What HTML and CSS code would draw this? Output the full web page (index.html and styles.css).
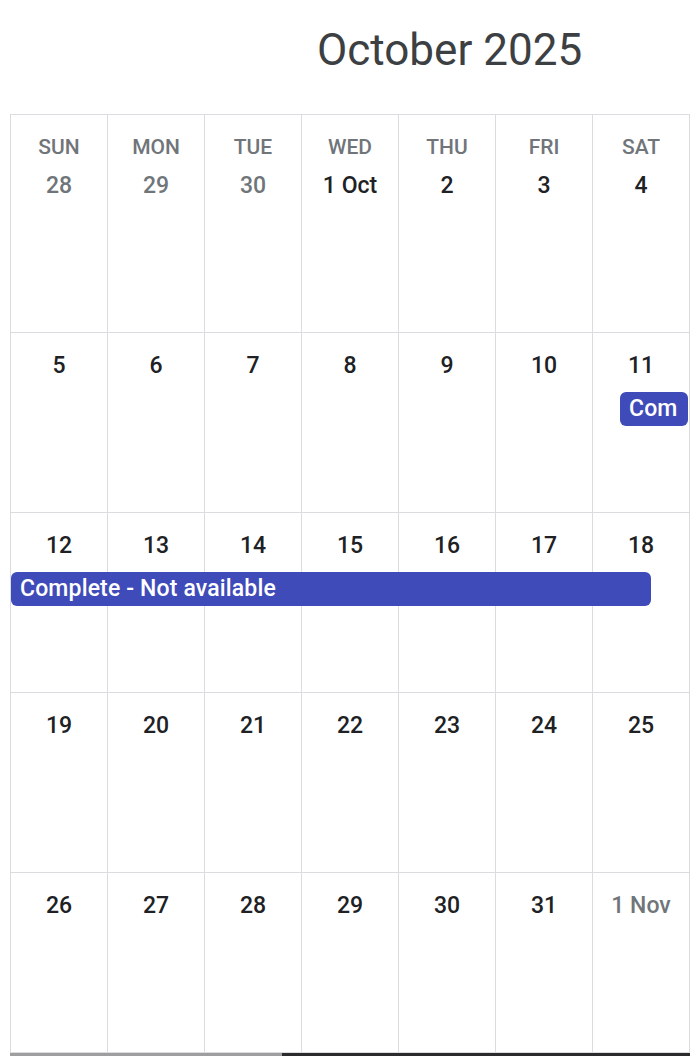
FILE: index.html
```html
<!DOCTYPE html>
<html>
<head>
<meta charset="utf-8">
<link rel="stylesheet" href="styles.css">
</head>
<body>
<header class="toolbar">
  <h1 class="title">October 2025</h1>
</header>
<main class="month">
  <div class="week week-first">
    <div class="cell"><span class="dow">SUN</span><span class="date muted">28</span></div>
    <div class="cell"><span class="dow">MON</span><span class="date muted">29</span></div>
    <div class="cell"><span class="dow">TUE</span><span class="date muted">30</span></div>
    <div class="cell"><span class="dow">WED</span><span class="date">1 Oct</span></div>
    <div class="cell"><span class="dow">THU</span><span class="date">2</span></div>
    <div class="cell"><span class="dow">FRI</span><span class="date">3</span></div>
    <div class="cell"><span class="dow">SAT</span><span class="date">4</span></div>
  </div>
  <div class="week">
    <div class="cell"><span class="date">5</span></div>
    <div class="cell"><span class="date">6</span></div>
    <div class="cell"><span class="date">7</span></div>
    <div class="cell"><span class="date">8</span></div>
    <div class="cell"><span class="date">9</span></div>
    <div class="cell"><span class="date">10</span></div>
    <div class="cell"><span class="date">11</span><span class="chip chip-cut">Com</span></div>
  </div>
  <div class="week">
    <div class="cell"><span class="date">12</span></div>
    <div class="cell"><span class="date">13</span></div>
    <div class="cell"><span class="date">14</span></div>
    <div class="cell"><span class="date">15</span></div>
    <div class="cell"><span class="date">16</span></div>
    <div class="cell"><span class="date">17</span></div>
    <div class="cell"><span class="date">18</span></div>
    <span class="chip chip-span">Complete - Not available</span>
  </div>
  <div class="week">
    <div class="cell"><span class="date">19</span></div>
    <div class="cell"><span class="date">20</span></div>
    <div class="cell"><span class="date">21</span></div>
    <div class="cell"><span class="date">22</span></div>
    <div class="cell"><span class="date">23</span></div>
    <div class="cell"><span class="date">24</span></div>
    <div class="cell"><span class="date">25</span></div>
  </div>
  <div class="week">
    <div class="cell"><span class="date">26</span></div>
    <div class="cell"><span class="date">27</span></div>
    <div class="cell"><span class="date">28</span></div>
    <div class="cell"><span class="date">29</span></div>
    <div class="cell"><span class="date">30</span></div>
    <div class="cell"><span class="date">31</span></div>
    <div class="cell"><span class="date muted">1 Nov</span></div>
  </div>
</main>
<div class="scrollbar"><div class="scroll-track"></div><div class="scroll-thumb"></div></div>
</body>
</html>
```
FILE: styles.css
```css
html, body {
  margin: 0;
  padding: 0;
  background: #ffffff;
}
body {
  width: 700px;
  height: 1056px;
  overflow: hidden;
  font-family: Roboto, "Liberation Sans", sans-serif;
  color: #202124;
}
.toolbar {
  height: 114px;
  display: flex;
  align-items: flex-start;
  padding-left: 317px;
  box-sizing: border-box;
}
.title {
  margin: 24px 0 0 0;
  font-family: Roboto, "Liberation Sans", sans-serif;
  font-weight: 400;
  font-size: 44px;
  line-height: 52px;
  color: #3c4043;
}
.month {
  margin: 0 10px;
  width: 680px;
  border-top: 1px solid #dadce0;
  border-left: 1px solid #dadce0;
  box-sizing: border-box;
}
.week {
  position: relative;
  display: grid;
  grid-template-columns: repeat(7, 97px);
  height: 180px;
}
.week-first {
  height: 218px;
}
.cell {
  border-right: 1px solid #dadce0;
  border-bottom: 1px solid #dadce0;
  display: flex;
  flex-direction: column;
  align-items: center;
  padding-top: 18px;
  position: relative;
  overflow: hidden;
}
.dow {
  font-size: 21px;
  line-height: 28px;
  color: #70757a;
  font-weight: 500;
}
.date {
  font-size: 23px;
  line-height: 30px;
  font-weight: 500;
  color: #202124;
}
.week-first .date {
  margin-top: 10px;
}
.date.muted {
  color: #70757a;
}
.chip {
  background: #3f4bb8;
  color: #ffffff;
  font-size: 23px;
  font-weight: 500;
  letter-spacing: 0.15px;
  line-height: 34px;
  height: 34px;
  border-radius: 6px;
  white-space: nowrap;
  box-sizing: border-box;
  padding-left: 9px;
  overflow: hidden;
}
.chip-cut {
  position: absolute;
  top: 59px;
  left: 27px;
  width: 68px;
}
.chip-span {
  position: absolute;
  top: 59px;
  left: 0;
  width: 640px;
}
.scrollbar {
  display: flex;
  margin: 0 10px;
  height: 3px;
}
.scroll-track {
  width: 272px;
  background: #9e9e9e;
}
.scroll-thumb {
  flex: 1;
  background: #2b2b2b;
}
```
